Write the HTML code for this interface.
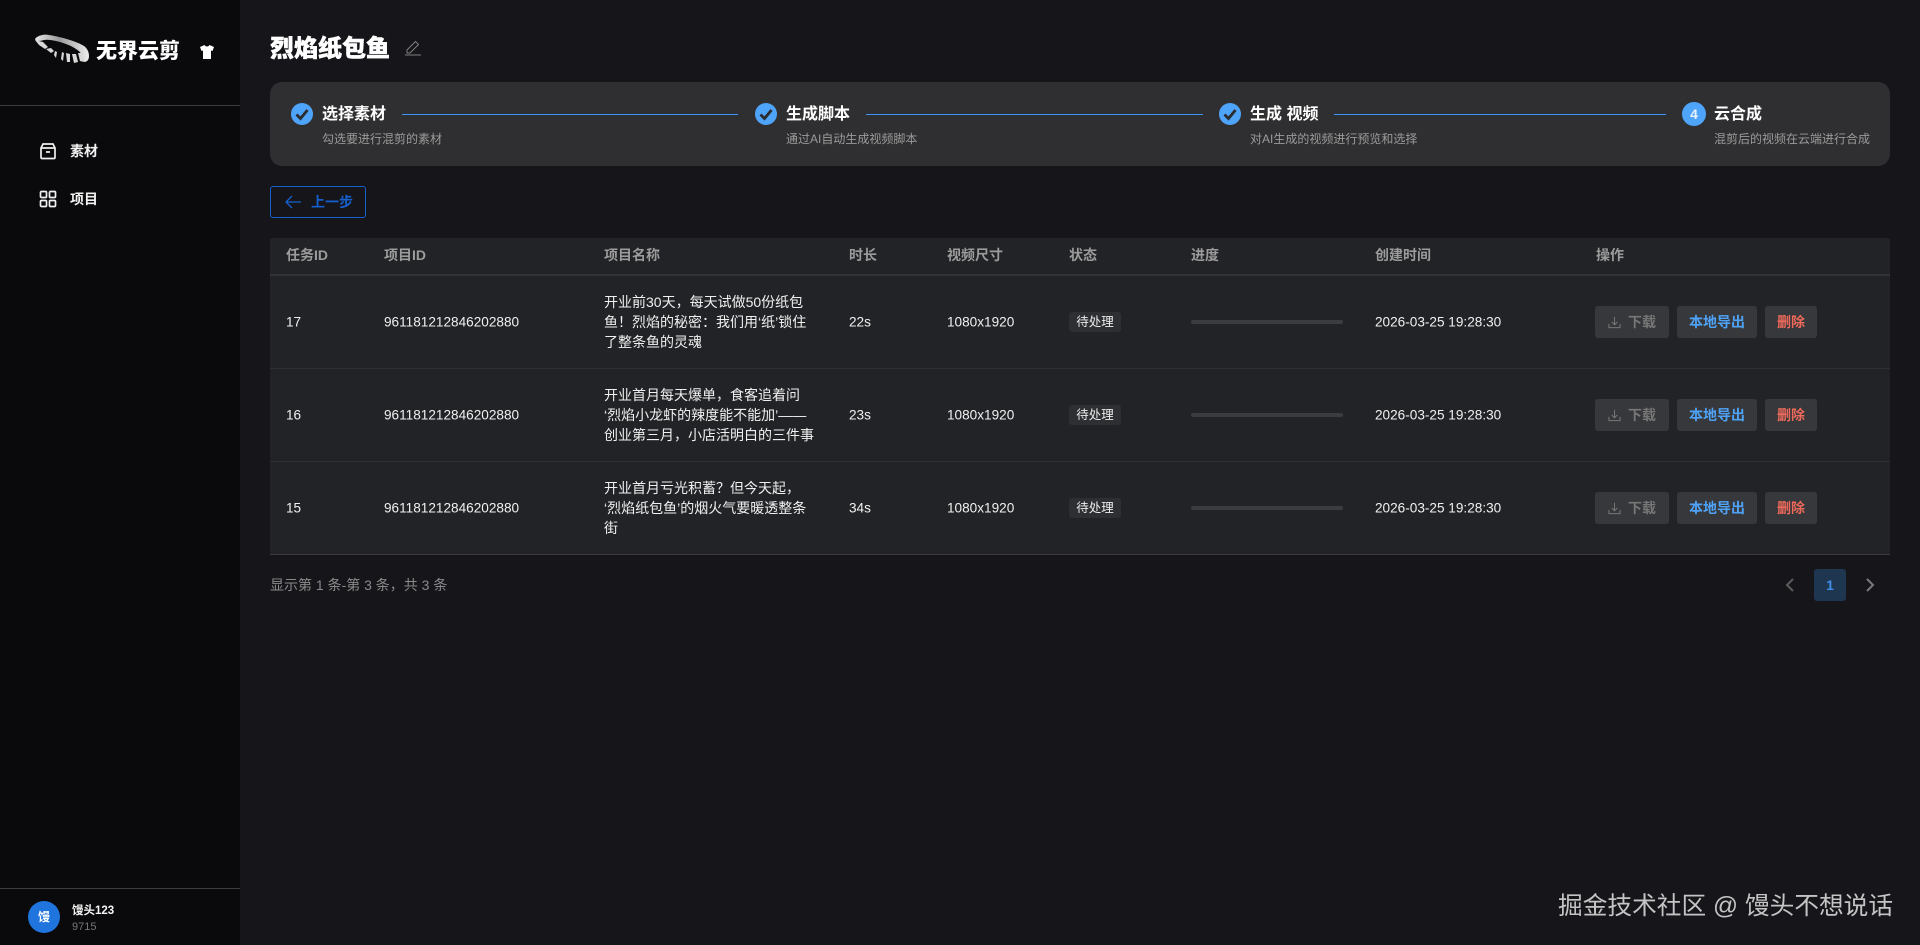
<!DOCTYPE html>
<html lang="zh-CN">
<head>
<meta charset="utf-8">
<title>无界云剪</title>
<style>
*{box-sizing:border-box;margin:0;padding:0}
html,body{width:1920px;height:945px;overflow:hidden;background:#15151a;color:#fff;font-family:"Liberation Sans","Noto Sans CJK SC",sans-serif}
.a{position:absolute;white-space:nowrap}
.m{transform:translateY(-50%)}
#side{position:absolute;left:0;top:0;width:240px;height:945px;background:#0a0a0c}
.hr{position:absolute;left:0;width:240px;height:1px;background:#3c3c3e}
.nav{font-size:14px;font-weight:700;color:#f2f2f2}
#steps{position:absolute;left:270px;top:82px;width:1620px;height:84px;border-radius:12px;background:#2f2f31}
.st{font-size:16px;font-weight:700;color:#fff;line-height:20px}
.ss{font-size:12px;color:#9b9b9b;line-height:16px}
.ln{position:absolute;top:114px;height:1px;background:#3b93f5}
.ck{position:absolute;top:103px;width:22px;height:22px}
#tbl{position:absolute;left:270px;top:238px;width:1620px;height:317px;background:#222326;border-radius:2px 2px 0 0;border-bottom:1px solid #3a3b3e}
.b1{position:absolute;left:270px;width:1620px;height:1px;background:#2e2f32}
.th{font-size:14px;font-weight:700;color:#9c9c9c;top:255px}
.td{font-size:13.6px;color:#f0f0f0}
.nm{position:absolute;left:604px;width:228px;font-size:14px;line-height:20.4px;color:#f0f0f0;white-space:nowrap}
.tag{position:absolute;left:1069px;width:52px;height:20px;border-radius:3px;background:#2e2f33;color:#ececec;font-size:12.5px;line-height:20px;text-align:center}
.bar{position:absolute;left:1191px;width:152px;height:4px;border-radius:2px;background:#3b3c3f}
.btn{position:absolute;height:32px;border-radius:3px;background:#37383b;font-size:14px;font-weight:700;line-height:32px;text-align:center}
.d{left:1595px;width:74px;color:#777;padding-left:20px}
.d svg{position:absolute;left:13px;top:10px}
.l{left:1677px;width:80px;color:#4fa3f7}
.x{left:1765px;width:52px;color:#ef6a5b}
</style>
</head>
<body>
<div id="side"></div>
<svg class="a" style="left:34px;top:34px" width="56" height="29" viewBox="0 0 56 29">
<defs><linearGradient id="g" x1="0" x2="1"><stop offset="0" stop-color="#e8e8e8"/><stop offset=".45" stop-color="#9a9a9a"/><stop offset=".8" stop-color="#cfcfcf"/><stop offset="1" stop-color="#eee"/></linearGradient></defs>
<path d="M1 5C4 1 11 0 15 1C28 3 44 8 50 12C54 15 55 19 55 22C55 26 53 28 50 28L48 21C46 17 40 13 32 10C24 7 15 5 10 6C6 7 2 8 1 5Z" fill="url(#g)"/>
<path d="M1 6L9 8L14 13L11 15L5 11ZM12 15L17 14L20 17L17 19ZM21 17L23 18L22 24L20 21ZM28 18L30 19L29 27L27 25ZM32 19L36 20L36 28L33 28ZM38 20L42 20L44 28L40 29ZM44 19L48 19L50 28L46 27Z" fill="#d8d8d8"/>
</svg>
<div class="a m" style="left:96px;top:50px;font-size:21px;font-weight:900;color:#fff">无界云剪</div>
<svg class="a" style="left:200px;top:44px" width="14" height="16" viewBox="0 0 14 16"><path d="M4.500 1L0 3L1.500 7L3 6.500V15H11V6.500L12.500 7L14 3L9.500 1C8.500 3 5.500 3 4.500 1Z" fill="#fff"/></svg>
<div class="hr" style="top:105px"></div>
<svg class="a" style="left:39px;top:142px" width="18" height="18" viewBox="0 0 18 18" fill="none" stroke="#f0f0f0" stroke-width="1.700"><path d="M2 6L4 2H14L16 6V15.500Q16 16.500 15 16.500H3Q2 16.500 2 15.500Z"/><path d="M2 6H16M7 10H11"/></svg>
<div class="a m nav" style="left:70px;top:151px">素材</div>
<svg class="a" style="left:39px;top:190px" width="18" height="18" viewBox="0 0 18 18" fill="none" stroke="#f0f0f0" stroke-width="1.700"><rect x="1.500" y="1.500" width="6" height="6" rx="1"/><rect x="10.500" y="1.500" width="6" height="6" rx="1"/><rect x="1.500" y="10.500" width="6" height="6" rx="1"/><rect x="10.500" y="10.500" width="6" height="6" rx="1"/></svg>
<div class="a m nav" style="left:70px;top:199px">项目</div>
<div class="hr" style="top:888px"></div>
<div class="a" style="left:28px;top:901px;width:32px;height:32px;border-radius:50%;background:#1f74dd;color:#fff;font-size:12px;font-weight:700;line-height:32px;text-align:center">馒</div>
<div class="a m" style="left:72px;top:910px;font-size:11.500px;font-weight:700;color:#f5f5f5">馒头123</div>
<div class="a m" style="left:72px;top:927px;font-size:11px;color:#777">9715</div>

<div class="a m" style="left:270px;top:46px;font-size:24px;font-weight:900;color:#fff;-webkit-text-stroke:.4px #fff">烈焰纸包鱼</div>
<svg class="a" style="left:404px;top:38px" width="18" height="18" viewBox="0 0 18 18" fill="none" stroke="#808080" stroke-width="1"><path d="M3 12L11.500 3.500L14.500 6.500L6 15H3ZM1 17H17"/></svg>

<div id="steps"></div>
<svg class="ck" style="left:291px" viewBox="0 0 22 22"><circle cx="11" cy="11" r="11" fill="#4ea4f9"/><path d="M5.500 11.500L9.500 15.500L16.500 7" fill="none" stroke="#2b2b2e" stroke-width="2.800"/></svg>
<div class="a m st" style="left:322px;top:115px">选择素材</div>
<div class="a m ss" style="left:322px;top:139px">勾选要进行混剪的素材</div>
<div class="ln" style="left:402px;width:336px"></div>
<svg class="ck" style="left:755px" viewBox="0 0 22 22"><circle cx="11" cy="11" r="11" fill="#4ea4f9"/><path d="M5.500 11.500L9.500 15.500L16.500 7" fill="none" stroke="#2b2b2e" stroke-width="2.800"/></svg>
<div class="a m st" style="left:786px;top:115px">生成脚本</div>
<div class="a m ss" style="left:786px;top:139px">通过AI自动生成视频脚本</div>
<div class="ln" style="left:866px;width:337px"></div>
<svg class="ck" style="left:1219px" viewBox="0 0 22 22"><circle cx="11" cy="11" r="11" fill="#4ea4f9"/><path d="M5.500 11.500L9.500 15.500L16.500 7" fill="none" stroke="#2b2b2e" stroke-width="2.800"/></svg>
<div class="a m st" style="left:1250px;top:115px">生成 视频</div>
<div class="a m ss" style="left:1250px;top:139px">对AI生成的视频进行预览和选择</div>
<div class="ln" style="left:1334px;width:332px"></div>
<div class="a" style="left:1682px;top:102px;width:24px;height:24px;border-radius:50%;background:#4ea4f9;color:#e8f2fd;font-size:14px;font-weight:700;line-height:24px;text-align:center">4</div>
<div class="a m st" style="left:1714px;top:115px">云合成</div>
<div class="a m ss" style="left:1714px;top:139px">混剪后的视频在云端进行合成</div>

<div class="a" style="left:270px;top:186px;width:96px;height:32px;border:1px solid #1560cc;border-radius:3px"></div>
<svg class="a" style="left:284px;top:194px" width="18" height="16" viewBox="0 0 18 16" fill="none" stroke="#1560cc" stroke-width="1.300"><path d="M17 8H2M8 2L2 8L8 14"/></svg>
<div class="a m" style="left:311px;top:202px;font-size:14px;font-weight:700;color:#1560cc">上一步</div>

<div id="tbl"></div>
<div class="a" style="left:270px;top:274px;width:1620px;height:2px;background:#323336"></div>
<div class="b1" style="top:368px"></div>
<div class="b1" style="top:461px"></div>
<div class="a m th" style="left:286px">任务ID</div>
<div class="a m th" style="left:384px">项目ID</div>
<div class="a m th" style="left:604px">项目名称</div>
<div class="a m th" style="left:849px">时长</div>
<div class="a m th" style="left:947px">视频尺寸</div>
<div class="a m th" style="left:1069px">状态</div>
<div class="a m th" style="left:1191px">进度</div>
<div class="a m th" style="left:1375px">创建时间</div>
<div class="a m th" style="left:1596px">操作</div>

<div class="a m td" style="left:286px;top:322px">17</div>
<div class="a m td" style="left:384px;top:322px">961181212846202880</div>
<div class="nm" style="top:291.500px">开业前30天，每天试做50份纸包<br>鱼！烈焰的秘密：我们用‘纸’锁住<br>了整条鱼的灵魂</div>
<div class="a m td" style="left:849px;top:322px">22s</div>
<div class="a m td" style="left:947px;top:322px">1080x1920</div>
<div class="tag" style="top:312px">待处理</div>
<div class="bar" style="top:320px"></div>
<div class="a m td" style="left:1375px;top:322px">2026-03-25 19:28:30</div>
<div class="btn d" style="top:306px"><svg width="13" height="13" viewBox="0 0 14 14" fill="none" stroke="#777" stroke-width="1.100"><path d="M7 1V9M4 6.500L7 9.500L10 6.500M1 8.500V12.500H13V8.500"/></svg>下载</div>
<div class="btn l" style="top:306px">本地导出</div>
<div class="btn x" style="top:306px">删除</div>

<div class="a m td" style="left:286px;top:415px">16</div>
<div class="a m td" style="left:384px;top:415px">961181212846202880</div>
<div class="nm" style="top:384.500px">开业首月每天爆单，食客追着问<br>‘烈焰小龙虾的辣度能不能加’——<br>创业第三月，小店活明白的三件事</div>
<div class="a m td" style="left:849px;top:415px">23s</div>
<div class="a m td" style="left:947px;top:415px">1080x1920</div>
<div class="tag" style="top:405px">待处理</div>
<div class="bar" style="top:413px"></div>
<div class="a m td" style="left:1375px;top:415px">2026-03-25 19:28:30</div>
<div class="btn d" style="top:399px"><svg width="13" height="13" viewBox="0 0 14 14" fill="none" stroke="#777" stroke-width="1.100"><path d="M7 1V9M4 6.500L7 9.500L10 6.500M1 8.500V12.500H13V8.500"/></svg>下载</div>
<div class="btn l" style="top:399px">本地导出</div>
<div class="btn x" style="top:399px">删除</div>

<div class="a m td" style="left:286px;top:508px">15</div>
<div class="a m td" style="left:384px;top:508px">961181212846202880</div>
<div class="nm" style="top:477.500px">开业首月亏光积蓄？但今天起，<br>‘烈焰纸包鱼’的烟火气要暖透整条<br>街</div>
<div class="a m td" style="left:849px;top:508px">34s</div>
<div class="a m td" style="left:947px;top:508px">1080x1920</div>
<div class="tag" style="top:498px">待处理</div>
<div class="bar" style="top:506px"></div>
<div class="a m td" style="left:1375px;top:508px">2026-03-25 19:28:30</div>
<div class="btn d" style="top:492px"><svg width="13" height="13" viewBox="0 0 14 14" fill="none" stroke="#777" stroke-width="1.100"><path d="M7 1V9M4 6.500L7 9.500L10 6.500M1 8.500V12.500H13V8.500"/></svg>下载</div>
<div class="btn l" style="top:492px">本地导出</div>
<div class="btn x" style="top:492px">删除</div>

<div class="a m" style="left:270px;top:585px;font-size:14px;color:#8a8a8a">显示第 1 条-第 3 条，共 3 条</div>
<svg class="a" style="left:1784px;top:577px" width="12" height="16" viewBox="0 0 12 16" fill="none" stroke="#5c5c5c" stroke-width="2"><path d="M9 2L3 8L9 14"/></svg>
<div class="a" style="left:1814px;top:569px;width:32px;height:32px;border-radius:3px;background:#1e3650;color:#3f8fe8;font-size:14px;font-weight:700;line-height:32px;text-align:center">1</div>
<svg class="a" style="left:1864px;top:577px" width="12" height="16" viewBox="0 0 12 16" fill="none" stroke="#7a7a7a" stroke-width="2"><path d="M3 2L9 8L3 14"/></svg>

<div class="a m" style="left:1558px;top:904px;font-size:24.700px;color:#c4c4c4">掘金技术社区 @ 馒头不想说话</div>
</body>
</html>
